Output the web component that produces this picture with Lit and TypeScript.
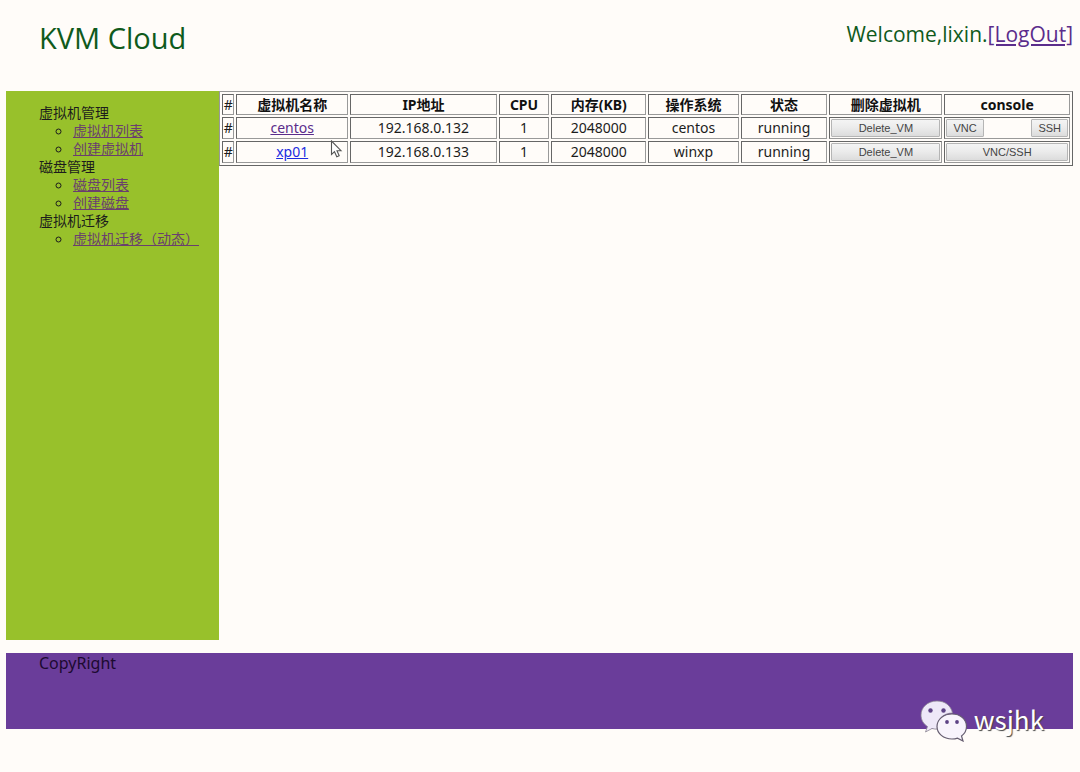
import { LitElement, html, css } from "lit";
import { customElement, state } from "lit/decorators.js";

interface Machine {
  name: string;
  ip: string;
  cpu: number;
  memory: number;
  os: string;
  status: string;
  visited: boolean;
  split: boolean;
}

const MENU = [
  { title: "虚拟机管理", links: ["虚拟机列表", "创建虚拟机"] },
  { title: "磁盘管理", links: ["磁盘列表", "创建磁盘"] },
  { title: "虚拟机迁移", links: ["虚拟机迁移（动态）"] },
];

@customElement("app-root")
export class AppRoot extends LitElement {
  static styles = css`
    :host {
      display: flex;
      flex-direction: column;
      box-sizing: border-box;
      min-height: 100vh;
      padding: 0 7px 43px 6px;
      background: #fffcf9;
      color: #1c1c1c;
      font-family: "Noto Sans", "Noto Sans CJK SC", sans-serif;
      font-size: 14px;
      line-height: 18px;
    }
    a { color: #5b2d8c; }
    .header {
      display: flex;
      justify-content: space-between;
      align-items: flex-start;
      height: 91px;
      box-sizing: border-box;
      padding: 16px 0 0 33px;
      color: #0f5a1c;
    }
    .title {
      margin: 0;
      font-family: "Open Sans", "Noto Sans", sans-serif;
      font-size: 29px;
      line-height: 44px;
      font-weight: 400;
    }
    .welcome {
      margin: 0;
      font-family: "Open Sans", "Noto Sans", sans-serif;
      font-size: 21px;
      line-height: 36px;
    }
    .main {
      display: flex;
      flex: 1;
    }
    .side {
      flex: 0 0 20%;
      box-sizing: border-box;
      padding: 12px 0 0 33px;
      background: #98c12b;
      font-family: "Noto Sans CJK SC", sans-serif;
    }
    .menu, .sub {
      margin: 0;
      padding: 0;
      list-style: none;
    }
    .sub {
      padding-left: 34px;
      list-style: circle;
    }
    .side a { color: #6a3f6e; }
    .content { flex: 1; min-width: 0; }
    .vms {
      width: 100%;
      table-layout: fixed;
      border: 1px solid #777;
      border-color: #999 #666 #666 #999;
      border-spacing: 2px;
      text-align: center;
    }
    .vms th, .vms td {
      height: 20px;
      padding: 0 1px;
      border: 1px solid #777;
      border-color: #666 #999 #999 #666;
    }
    .vms th { height: 19px; line-height: 16px; color: #111; }
    .vms .mark { padding: 0; font-weight: 400; color: #1c1c1c; }
    .unvisited { color: #1b2be0; }
    .pair { display: flex; justify-content: space-between; }
    .btn {
      display: block;
      box-sizing: border-box;
      height: 18px;
      padding: 0 6px;
      border: 1px solid #b5b5b5;
      border-radius: 1px;
      background: linear-gradient(#f4f4f4, #ececec 45%, #dcdcdc);
      color: #444;
      font: 11px/16px "Liberation Sans", sans-serif;
    }
    .wide { width: 100%; }
    .c-mark { width: 1.4%; }
    .c-name { width: 13.5%; }
    .c-ip { width: 17.6%; }
    .c-cpu { width: 6.1%; }
    .c-mem { width: 11.4%; }
    .c-os { width: 10.9%; }
    .c-state { width: 10.4%; }
    .c-del { width: 13.6%; }
    .c-con { width: 15.1%; }
    .footer {
      position: relative;
      height: 76px;
      box-sizing: border-box;
      margin-top: 13px;
      padding-left: 33px;
      background: #6a3d9a;
      color: #1c0a30;
      font-size: 16px;
      line-height: 20px;
    }
    .brand {
      position: absolute;
      right: 29px;
      bottom: -13px;
      display: flex;
      align-items: center;
      gap: 6px;
      color: #fff;
      font-family: "Noto Sans CJK SC", sans-serif;
      font-size: 26px;
      line-height: 38px;
      text-shadow: 1px 1px 1px #444;
    }
    .brand span { padding-bottom: 4px; }
    .pointer {
      position: absolute;
      left: 330px;
      top: 140px;
    }
  `;

  @state() private machines: Machine[] = [
    { name: "centos", ip: "192.168.0.132", cpu: 1, memory: 2048000, os: "centos", status: "running", visited: true, split: true },
    { name: "xp01", ip: "192.168.0.133", cpu: 1, memory: 2048000, os: "winxp", status: "running", visited: false, split: false },
  ];

  private row(m: Machine) {
    return html`<tr>
      <td class="mark">#</td>
      <td><a class=${m.visited ? "" : "unvisited"} href="#${m.name}">${m.name}</a></td>
      <td>${m.ip}</td>
      <td>${m.cpu}</td>
      <td>${m.memory}</td>
      <td>${m.os}</td>
      <td>${m.status}</td>
      <td><button class="btn wide" type="button">Delete_VM</button></td>
      <td>${m.split
        ? html`<div class="pair"><button class="btn" type="button">VNC</button><button class="btn" type="button">SSH</button></div>`
        : html`<button class="btn wide" type="button">VNC/SSH</button>`}</td>
    </tr>`;
  }

  render() {
    return html`
      <header class="header">
        <h1 class="title">KVM Cloud</h1>
        <p class="welcome">Welcome,lixin.<a href="#logout">[LogOut]</a></p>
      </header>
      <div class="main">
        <nav class="side">
          <ul class="menu">
            ${MENU.map((g) => html`<li>${g.title}
              <ul class="sub">${g.links.map((l) => html`<li><a href="#">${l}</a></li>`)}</ul>
            </li>`)}
          </ul>
        </nav>
        <main class="content">
          <table class="vms">
            <colgroup>
              <col class="c-mark"><col class="c-name"><col class="c-ip"><col class="c-cpu"><col class="c-mem"><col class="c-os"><col class="c-state"><col class="c-del"><col class="c-con">
            </colgroup>
            <thead>
              <tr>
                <th class="mark">#</th><th>虚拟机名称</th><th>IP地址</th><th>CPU</th><th>内存(KB)</th><th>操作系统</th><th>状态</th><th>删除虚拟机</th><th>console</th>
              </tr>
            </thead>
            <tbody>${this.machines.map((m) => this.row(m))}</tbody>
          </table>
        </main>
      </div>
      <footer class="footer">
        CopyRight
        <div class="brand">
          <svg width="48" height="42" viewBox="0 0 48 42" aria-hidden="true">
            <path d="M17 1C7.500 1 1 7.500 1 15c0 5 2.500 9 6.500 11.500L5.500 32l6.500-3.500c2 .6 4 .8 6 .5C16 20 23 13 32.500 13 31 5.500 25 1 17 1z" fill="#eee8f8" stroke="#8a8492" stroke-width=".8"/>
            <path d="M32 14c-8.500 0-15 5.500-15 12.500S23.500 39 32 39c2 0 4-.3 5.500-.9L43 41l-1.500-5c3.200-2.300 5-5.600 5-9.500C46.500 19.500 40.500 14 32 14z" fill="#f8f4fc" stroke="#655d70" stroke-width="1.200"/>
            <g fill="#5d4385">
              <circle cx="10.500" cy="10.500" r="2.200"/><circle cx="23.500" cy="10.500" r="2.200"/>
              <circle cx="27" cy="22" r="1.900"/><circle cx="37" cy="22" r="1.900"/>
            </g>
          </svg>
          <span>wsjhk</span>
        </div>
      </footer>
      <svg class="pointer" width="13" height="19" viewBox="0 0 13 19" aria-hidden="true">
        <path d="M1.500 1v13.500l3-2.800 2.300 5 2.400-1-2.200-5h4z" fill="#fff" stroke="#555" stroke-width="1.100"/>
      </svg>
    `;
  }
}
